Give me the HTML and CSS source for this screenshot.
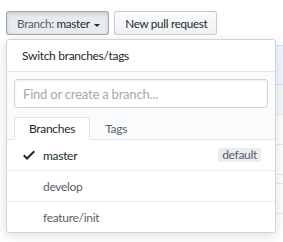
FILE: index.html
```html
<!DOCTYPE html>
<html>

<head>
    <title>Branch select</title>
    <link rel="stylesheet" href="styles.css">
</head>

<body>
    <div class="toolbar">
        <button class="btn btn-selected"><span class="muted">Branch:</span> master <span class="caret"></span></button>
        <button class="btn">New pull request</button>
    </div>

    <!-- page content behind the menu -->
    <div class="file-wrap">
        <div class="commit-tease"></div>
        <div class="file-row shaded"></div>
        <div class="file-row"></div>
        <div class="file-row"></div>
        <div class="file-row short"></div>
        <div class="file-row"></div>
    </div>

    <div class="select-menu">
        <div class="menu-header">Switch branches/tags</div>
        <div class="menu-filter">
            <input class="filter-input" type="text" placeholder="Find or create a branch...">
            <div class="menu-tabs">
                <span class="tab selected">Branches</span>
                <span class="tab">Tags</span>
            </div>
        </div>
        <div class="menu-list">
            <div class="menu-item selected">
                <svg class="check" width="12" height="16" viewBox="0 0 12 16">
                    <path fill-rule="evenodd" d="M12 5l-8 8-4-4 1.5-1.5L4 10l6.5-6.5L12 5z"></path>
                </svg>
                <span class="item-name">master</span>
                <span class="label">default</span>
            </div>
            <div class="menu-item">
                <span class="item-name">develop</span>
            </div>
            <div class="menu-item last">
                <span class="item-name">feature/init</span>
            </div>
        </div>
    </div>
</body>

</html>
```

FILE: styles.css
```css
body {
    margin: 0;
    background-color: #fff;
    font-family: Lato, "Liberation Sans", sans-serif;
    font-size: 12px;
    letter-spacing: -0.3px;
    color: #24292e;
}

.toolbar {
    display: flex;
    gap: 5px;
    padding: 11px 0 0 6px;
}

.btn {
    height: 24px;
    padding: 0 9px 0 10px;
    font-family: inherit;
    font-size: 11.7px;
    letter-spacing: -0.3px;
    color: #24292e;
    background-image: linear-gradient(-180deg, #fafbfc 0%, #eff3f6 90%);
    border: 1px solid rgba(27, 31, 35, 0.2);
    border-radius: 3px;
    line-height: 22px;
}

.btn-selected {
    padding-right: 8px;
    background-image: none;
    background-color: #e9ecef;
    border-color: rgba(27, 31, 35, 0.35);
    box-shadow: inset 0 2px 4px rgba(27, 31, 35, 0.15);
}

.muted {
    color: #586069;
}

.caret {
    display: inline-block;
    width: 0;
    height: 0;
    margin-left: 2px;
    vertical-align: middle;
    border-top: 3px solid #24292e;
    border-left: 3px solid transparent;
    border-right: 3px solid transparent;
}

/* background listing */
.file-wrap {
    margin: 10px 0 0 6px;
    border-left: 1px solid #d1d5da;
}

.commit-tease {
    height: 38px;
    background-color: #f1f8ff;
    border-top: 1px solid #c8e1ff;
    border-bottom: 1px solid #c8e1ff;
}

.file-row {
    height: 29px;
    border-bottom: 1px solid #eaecef;
}

.file-row.shaded {
    background-color: #f6f8fa;
}

.file-row.short {
    height: 8px;
}

/* dropdown */
.select-menu {
    position: absolute;
    top: 39px;
    left: 6px;
    width: 268px;
    background-color: #fff;
    border: 1px solid #d1d5da;
    border-radius: 3px;
    box-shadow: 0 3px 12px rgba(27, 31, 35, 0.15);
}

.menu-header {
    height: 31px;
    line-height: 31px;
    padding: 0 15px;
    border-bottom: 1px solid #e1e4e8;
}

.menu-filter {
    padding: 7px 7px 0;
    background-color: #fafbfc;
    border-bottom: 1px solid #e1e4e8;
}

.filter-input {
    display: block;
    box-sizing: border-box;
    width: 100%;
    height: 29px;
    padding: 0 8px;
    font-family: inherit;
    font-size: 13px;
    letter-spacing: -0.2px;
    border: 1px solid #d1d5da;
    border-radius: 3px;
    box-shadow: inset 0 1px 2px rgba(27, 31, 35, 0.075);
}

.filter-input::placeholder {
    color: #a3aab1;
}

.menu-tabs {
    display: flex;
    margin-top: 9px;
    margin-bottom: -1px;
}

.tab {
    padding: 0 14px;
    height: 22px;
    line-height: 22px;
    color: #586069;
    border: 1px solid transparent;
    border-bottom: 0;
    border-radius: 3px 3px 0 0;
}

.tab.selected {
    padding: 0 14px;
    color: #24292e;
    background-color: #fff;
    border-color: #e1e4e8;
}

.menu-item {
    display: flex;
    align-items: center;
    height: 30px;
    padding: 0 14px 0 36px;
    color: #586069;
    border-bottom: 1px solid #eaecef;
}

.menu-item.last {
    border-bottom: 0;
}

.menu-item.selected {
    padding-left: 16px;
    color: #24292e;
}

.check {
    width: 12px;
    height: 16px;
    margin-right: 8px;
    fill: #24292e;
}

.item-name {
    flex: 1;
}

.label {
    padding: 0 4px;
    line-height: 14px;
    color: #586069;
    background-color: #eaecef;
    border-radius: 2px;
}
```
